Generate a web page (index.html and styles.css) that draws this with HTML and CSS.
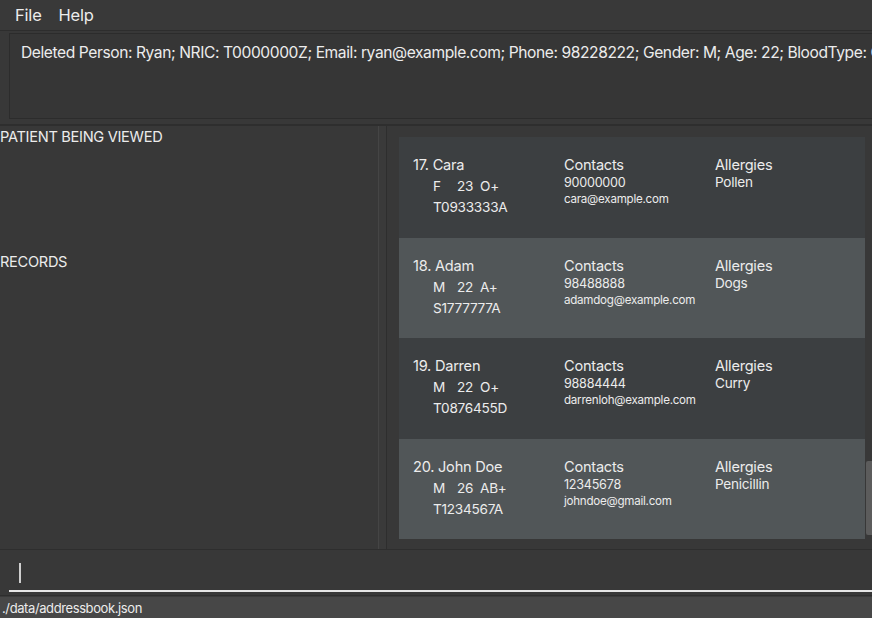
FILE: index.html
```html
<!DOCTYPE html>
<html>
<head>
<meta charset="utf-8">
<link rel="stylesheet" href="styles.css">
</head>
<body>
<div class="app">
  <div class="menubar"><span class="menu-item">File</span><span class="menu-item">Help</span></div>
  <div class="result-wrap">
    <div class="result">Deleted Person: Ryan; NRIC: T0000000Z; Email: ryan@example.com; Phone: 98228222; Gender: M; Age: 22; BloodType: O+; Allergies: Peanuts</div>
  </div>
  <div class="main">
    <div class="left">
      <div class="section-title">PATIENT BEING VIEWED</div>
      <div class="section-title records">RECORDS</div>
    </div>
    <div class="divider"></div>
    <div class="list-pane">
      <div class="list">
        <div class="card dark">
          <div class="col">
            <div class="name">17. Cara</div>
            <div class="meta"><span class="g">F</span><span class="a">23</span><span>O+</span></div>
            <div class="nric">T0933333A</div>
          </div>
          <div class="col">
            <div class="head">Contacts</div>
            <div class="phone">90000000</div>
            <div class="email">cara@example.com</div>
          </div>
          <div class="col">
            <div class="head">Allergies</div>
            <div class="allergy">Pollen</div>
          </div>
        </div>
        <div class="card light">
          <div class="col">
            <div class="name">18. Adam</div>
            <div class="meta"><span class="g">M</span><span class="a">22</span><span>A+</span></div>
            <div class="nric">S1777777A</div>
          </div>
          <div class="col">
            <div class="head">Contacts</div>
            <div class="phone">98488888</div>
            <div class="email">adamdog@example.com</div>
          </div>
          <div class="col">
            <div class="head">Allergies</div>
            <div class="allergy">Dogs</div>
          </div>
        </div>
        <div class="card dark">
          <div class="col">
            <div class="name">19. Darren</div>
            <div class="meta"><span class="g">M</span><span class="a">22</span><span>O+</span></div>
            <div class="nric">T0876455D</div>
          </div>
          <div class="col">
            <div class="head">Contacts</div>
            <div class="phone">98884444</div>
            <div class="email">darrenloh@example.com</div>
          </div>
          <div class="col">
            <div class="head">Allergies</div>
            <div class="allergy">Curry</div>
          </div>
        </div>
        <div class="card light">
          <div class="col">
            <div class="name">20. John Doe</div>
            <div class="meta"><span class="g">M</span><span class="a">26</span><span>AB+</span></div>
            <div class="nric">T1234567A</div>
          </div>
          <div class="col">
            <div class="head">Contacts</div>
            <div class="phone">12345678</div>
            <div class="email">johndoe@gmail.com</div>
          </div>
          <div class="col">
            <div class="head">Allergies</div>
            <div class="allergy">Penicillin</div>
          </div>
        </div>
      </div>
      <div class="scrollbar"><div class="thumb"></div></div>
    </div>
  </div>
  <div class="command">
    <div class="cmd-input"><span class="caret"></span></div>
  </div>
  <div class="status">./data/addressbook.json</div>
</div>
</body>
</html>
```

FILE: styles.css
```css
* { box-sizing: border-box; }
html, body {
  margin: 0;
  padding: 0;
  background: #383838;
  width: 872px;
  height: 618px;
  overflow: hidden;
}
body {
  font-family: Inter, "Liberation Sans", sans-serif;
  color: #ececec;
}
.app {
  display: flex;
  flex-direction: column;
  width: 872px;
  height: 618px;
}
.menubar {
  height: 31px;
  display: flex;
  align-items: center;
  gap: 17px;
  padding-left: 15px;
  padding-bottom: 1px;
  background: #393939;
  border-bottom: 1px solid #2d2d2d;
  font-size: 16.5px;
  letter-spacing: -0.2px;
}
.result-wrap {
  height: 95px;
  padding: 2px 0 5px 9px;
  border-bottom: 2px solid #2e2e2e;
  background: #383838;
}
.result {
  height: 86px;
  border: 1px solid #2c2c2c;
  border-right: none;
  background: #363636;
  padding: 9px 0 0 11px;
  font-size: 15.6px;
  letter-spacing: -0.42px;
  white-space: nowrap;
  overflow: hidden;
}
.main {
  display: flex;
  height: 424px;
  border-bottom: 1px solid #2e2e2e;
}
.left {
  width: 379px;
  display: flex;
  flex-direction: column;
  font-size: 14.6px;
}
.section-title {
  height: 125px;
  padding-top: 2px;
  letter-spacing: -0.3px;
}
.divider {
  width: 9px;
  border-left: 1px solid #454545;
  border-right: 1px solid #2e2e2e;
  background: #3a3a3a;
}
.list-pane {
  flex: 1;
  display: flex;
  padding: 11px 0 8px 12px;
  background: #383838;
}
.list {
  width: 466px;
  display: flex;
  flex-direction: column;
}
.card {
  height: 100.6px;
  display: grid;
  grid-template-columns: 151px 151px 1fr;
  padding: 19px 0 0 14px;
  letter-spacing: -0.25px;
}
.card.dark { background: #3c3f41; }
.card.light { background: #515658; }
.col { display: flex; flex-direction: column; }
.name { font-size: 14.6px; line-height: 18px; }
.meta {
  font-size: 13.6px;
  line-height: 18px;
  margin-top: 3px;
  padding-left: 20px;
  display: flex;
}
.meta .g { width: 24px; }
.meta .a { width: 23px; }
.nric {
  font-size: 13.6px;
  line-height: 18px;
  margin-top: 3px;
  padding-left: 20px;
}
.head { font-size: 14.6px; line-height: 18px; }
.phone { font-size: 12.6px; line-height: 15px; margin-top: 1px; }
.email { font-size: 11.6px; line-height: 16px; margin-top: 1px; }
.allergy { font-size: 13.6px; line-height: 16px; margin-top: 0px; }
.scrollbar {
  width: 6px;
  margin-left: 1px;
  padding-top: 324px;
}
.thumb {
  width: 6px;
  height: 74px;
  background: #5c5c5c;
  border-radius: 2px 0 0 2px;
}
.command {
  height: 46px;
  padding: 12px 0 0 9px;
  background: #383838;
  border-bottom: 1px solid #2e2e2e;
}
.cmd-input {
  height: 30px;
  border-bottom: 2px solid #e6e6e6;
  padding-left: 10px;
  padding-top: 1px;
}
.caret {
  display: block;
  width: 2px;
  height: 20px;
  background: #cfcfcf;
}
.status {
  flex: 1;
  background: #474747;
  border-top: 1px solid #3a3a3a;
  padding: 3px 0 0 2px;
  font-size: 13px;
  letter-spacing: -0.4px;
}
```
